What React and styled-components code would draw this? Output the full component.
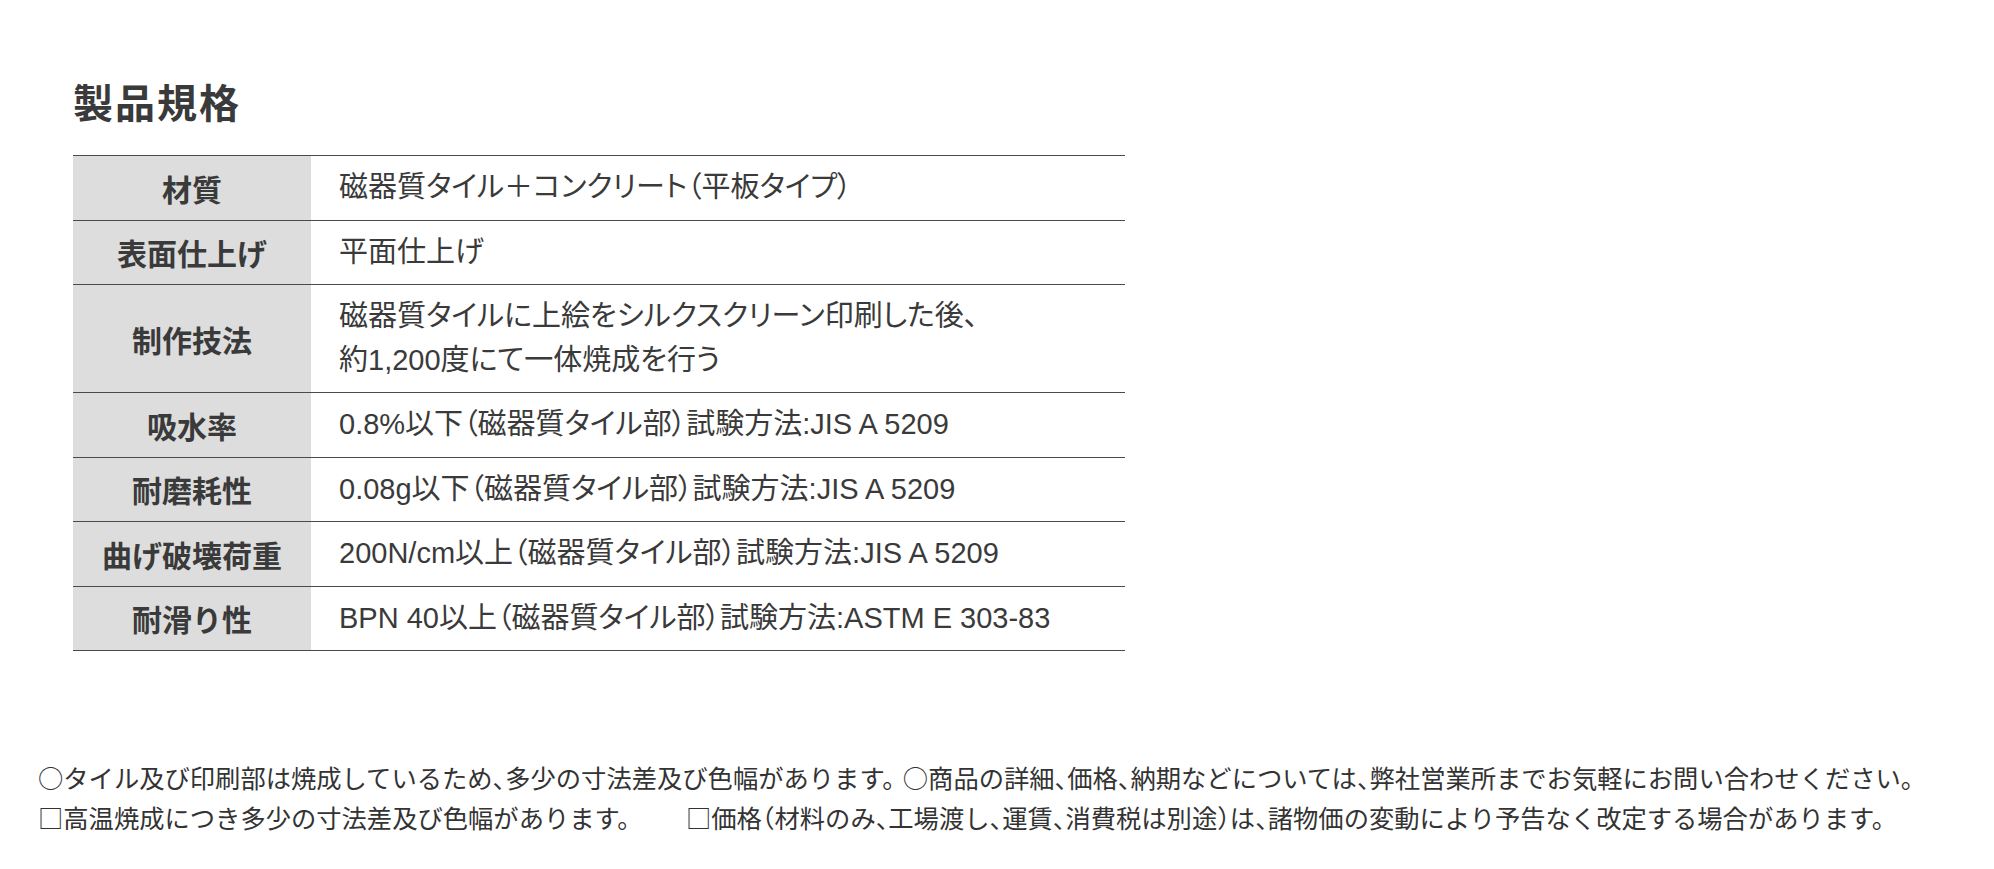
import React from "react";
import styled, { createGlobalStyle } from "styled-components";

const GlobalStyle = createGlobalStyle`
  body {
    margin: 0;
    background: #ffffff;
    color: #333333;
    font-family: "Noto Sans CJK JP", "Noto Sans", sans-serif;
  }
`;

const Page = styled.div`
  padding: 77px 0 0 38px;
`;

const Section = styled.section`
  margin-left: 35px;
  width: 1052px;
`;

const Title = styled.h2`
  font-size: 40px;
  font-weight: 700;
  line-height: 48px;
  letter-spacing: 2px;
  margin: 0 0 30px;
  color: #3a3a3a;
`;

const SpecTable = styled.div`
  display: grid;
  grid-template-columns: 238px 1fr;
  border-top: 1px solid #4a4a4a;
`;

const Label = styled.div`
  display: flex;
  align-items: center;
  justify-content: center;
  background: #dddddd;
  border-bottom: 1px solid #4a4a4a;
  font-size: 30px;
  font-weight: 700;
  color: #3a3a3a;
`;

const Value = styled.div`
  padding: 10px 28px;
  border-bottom: 1px solid #4a4a4a;
  font-family: "Liberation Sans", "Noto Sans CJK JP", sans-serif;
  font-size: 29px;
  line-height: 43.5px;
  color: #3a3a3a;
  font-feature-settings: "palt";
`;

const Notes = styled.div`
  margin-top: 106px;
  font-size: 25.3px;
  line-height: 40px;
  color: #333333;
  font-feature-settings: "halt";
`;

const Note = styled.p`
  margin: 0;
  display: flex;
  white-space: nowrap;
`;

const NoteItem = styled.span`
  margin-left: ${(p) => p.$gap || 0}px;
`;

const specs = [
  ["材質", ["磁器質タイル＋コンクリート（平板タイプ）"]],
  ["表面仕上げ", ["平面仕上げ"]],
  ["制作技法", ["磁器質タイルに上絵をシルクスクリーン印刷した後、", "約1,200度にて一体焼成を行う"]],
  ["吸水率", ["0.8%以下（磁器質タイル部）試験方法:JIS A 5209"]],
  ["耐磨耗性", ["0.08g以下（磁器質タイル部）試験方法:JIS A 5209"]],
  ["曲げ破壊荷重", ["200N/cm以上（磁器質タイル部）試験方法:JIS A 5209"]],
  ["耐滑り性", ["BPN 40以上（磁器質タイル部）試験方法:ASTM E 303-83"]],
];

const notes = [
  [
    "○タイル及び印刷部は焼成しているため、多少の寸法差及び色幅があります。",
    "○商品の詳細、価格、納期などについては、弊社営業所までお気軽にお問い合わせください。",
    8,
  ],
  [
    "□高温焼成につき多少の寸法差及び色幅があります。",
    "□価格（材料のみ、工場渡し、運賃、消費税は別途）は、諸物価の変動により予告なく改定する場合があります。",
    56,
  ],
];

export default function App() {
  return (
    <>
      <GlobalStyle />
      <Page>
        <Section>
          <Title>製品規格</Title>
          <SpecTable>
            {specs.map(([label, lines]) => (
              <React.Fragment key={label}>
                <Label>{label}</Label>
                <Value>
                  {lines.map((line) => (
                    <div key={line}>{line}</div>
                  ))}
                </Value>
              </React.Fragment>
            ))}
          </SpecTable>
        </Section>
        <Notes>
          {notes.map(([first, second, gap]) => (
            <Note key={first}>
              <NoteItem>{first}</NoteItem>
              <NoteItem $gap={gap}>{second}</NoteItem>
            </Note>
          ))}
        </Notes>
      </Page>
    </>
  );
}
